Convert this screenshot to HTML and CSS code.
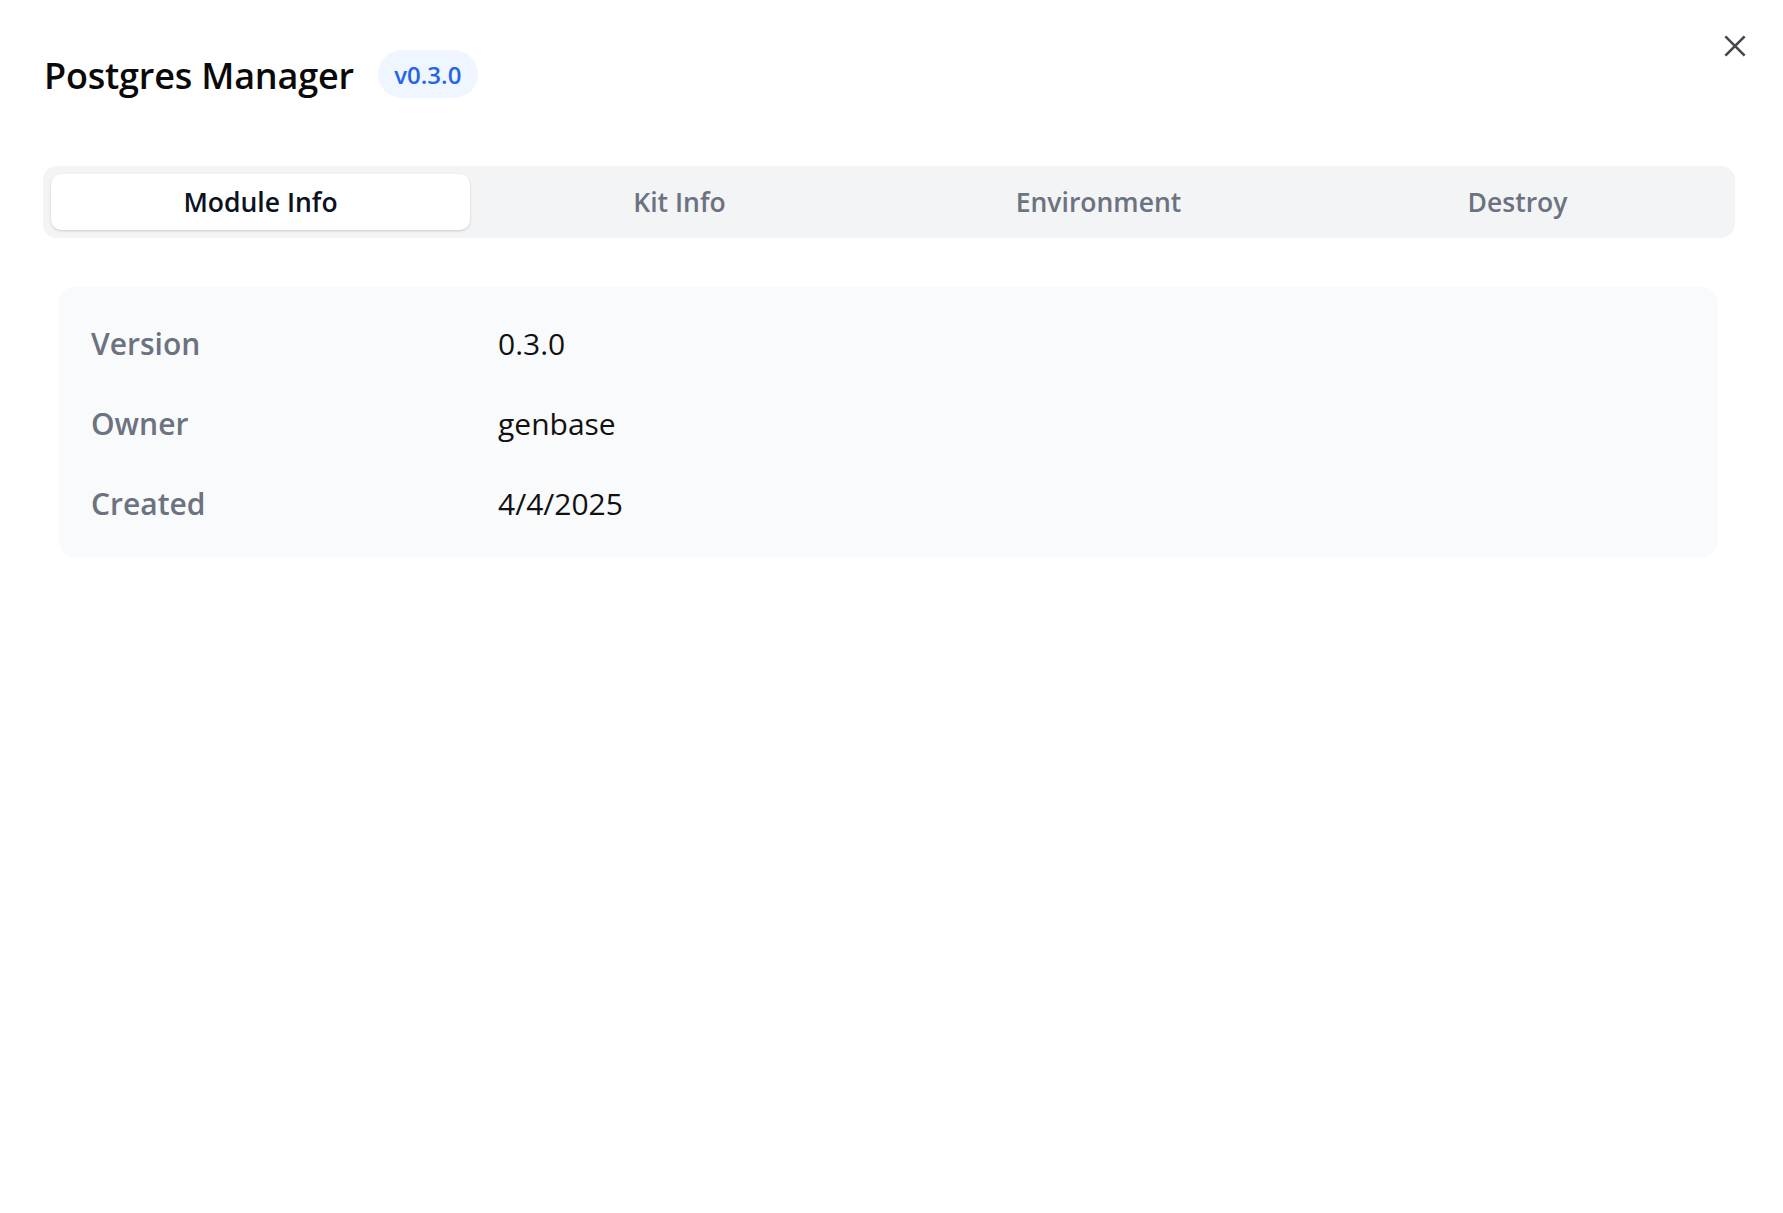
FILE: index.html
```html
<!DOCTYPE html>
<html lang="en">
<head>
<meta charset="utf-8">
<title>Postgres Manager</title>
<link rel="stylesheet" href="styles.css">
</head>
<body>
<div class="dialog">
  <button class="close" aria-label="Close">
    <svg viewBox="0 0 24 24" width="32" height="32" fill="none" stroke="currentColor" stroke-width="2" stroke-linecap="square"><path d="M5.5 5.5L18.5 18.5M18.5 5.5L5.5 18.5"/></svg>
  </button>
  <header class="header">
    <h1 class="title">Postgres Manager</h1>
    <span class="badge">v0.3.0</span>
  </header>
  <nav class="tabs">
    <div class="tab active">Module Info</div>
    <div class="tab">Kit Info</div>
    <div class="tab">Environment</div>
    <div class="tab">Destroy</div>
  </nav>
  <section class="card">
    <div class="row"><div class="label">Version</div><div class="value">0.3.0</div></div>
    <div class="row"><div class="label">Owner</div><div class="value">genbase</div></div>
    <div class="row"><div class="label">Created</div><div class="value">4/4/2025</div></div>
  </section>
</div>
</body>
</html>
```
FILE: styles.css
```css
html, body { margin: 0; padding: 0; background: #ffffff; }
body { font-family: "Open Sans", "Noto Sans", sans-serif; color: #111111; }

.dialog {
  position: relative;
  width: 1783px;
  height: 1213px;
  box-sizing: border-box;
  padding: 50px 48px 0 43px;
}

.close {
  position: absolute;
  top: 30px;
  left: 1719px;
  width: 32px;
  height: 32px;
  padding: 0;
  border: 0;
  background: none;
  color: #45484d;
  display: flex;
}

.header {
  display: flex;
  align-items: center;
  gap: 24px;
  height: 48px;
  padding-left: 1px;
}

.title {
  margin: 4px 0 0;
  font-size: 36px;
  font-weight: 600;
  line-height: 48px;
  color: #0a0a0a;
  letter-spacing: -0.2px;
}

.badge {
  display: inline-flex;
  align-items: center;
  justify-content: center;
  height: 48px;
  padding: 0 16px;
  min-width: 68px;
  border-radius: 24px;
  background: #eff6ff;
  color: #2563eb;
  font-size: 24px;
  font-weight: 600;
}

.tabs {
  margin-top: 68px;
  height: 72px;
  box-sizing: border-box;
  padding: 8px;
  background: #f3f4f6;
  border-radius: 14px;
  display: grid;
  grid-template-columns: repeat(4, 1fr);
}

.tab {
  display: flex;
  align-items: center;
  justify-content: center;
  font-size: 26.5px;
  font-weight: 600;
  color: #6b7280;
  border-radius: 10px;
}

.tab.active {
  background: #ffffff;
  color: #0b1220;
  box-shadow: 0 1px 3px rgba(0, 0, 0, 0.12), 0 1px 2px rgba(0, 0, 0, 0.06);
}

.card {
  margin: 49px 17px 0 16px;
  padding: 16px 32px 14px;
  background: #f9fafb;
  border-radius: 16px;
}

.row {
  display: flex;
  align-items: center;
  height: 80px;
}

.label {
  width: 407px;
  flex: none;
  font-size: 30px;
  font-weight: 600;
  color: #6b7280;
}

.value {
  font-size: 30px;
  font-weight: 400;
  color: #111111;
}
```
